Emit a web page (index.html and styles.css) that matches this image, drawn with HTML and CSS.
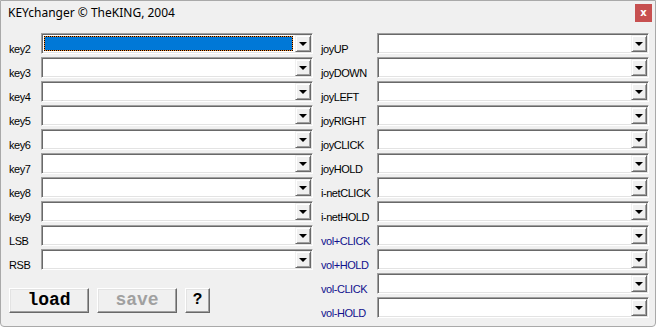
FILE: index.html
```html
<!DOCTYPE html>
<html lang="en">
<head>
    <meta charset="UTF-8">
    <title>KEYchanger</title>
    <link rel="stylesheet" href="styles.css">
</head>
<body>
    <div class="window">
        <div class="titlebar">
            <span class="title">KEYchanger © TheKING, 2004</span>
            <span class="close">x</span>
        </div>

        <div class="content">
            <div class="col col-left">
                <div class="row"><span class="lbl">key2</span><div class="combo"><span class="field"><span class="sel"></span></span><span class="drop"></span></div></div>
                <div class="row"><span class="lbl">key3</span><div class="combo"><span class="field"></span><span class="drop"></span></div></div>
                <div class="row"><span class="lbl">key4</span><div class="combo"><span class="field"></span><span class="drop"></span></div></div>
                <div class="row"><span class="lbl">key5</span><div class="combo"><span class="field"></span><span class="drop"></span></div></div>
                <div class="row"><span class="lbl">key6</span><div class="combo"><span class="field"></span><span class="drop"></span></div></div>
                <div class="row"><span class="lbl">key7</span><div class="combo"><span class="field"></span><span class="drop"></span></div></div>
                <div class="row"><span class="lbl">key8</span><div class="combo"><span class="field"></span><span class="drop"></span></div></div>
                <div class="row"><span class="lbl">key9</span><div class="combo"><span class="field"></span><span class="drop"></span></div></div>
                <div class="row"><span class="lbl">LSB</span><div class="combo"><span class="field"></span><span class="drop"></span></div></div>
                <div class="row"><span class="lbl">RSB</span><div class="combo"><span class="field"></span><span class="drop"></span></div></div>

                <div class="buttons">
                    <button class="btn btn-wide">load</button>
                    <button class="btn btn-wide" disabled>save</button>
                    <button class="btn btn-small">?</button>
                </div>
            </div>

            <div class="col col-right">
                <div class="row"><span class="lbl">joyUP</span><div class="combo"><span class="field"></span><span class="drop"></span></div></div>
                <div class="row"><span class="lbl">joyDOWN</span><div class="combo"><span class="field"></span><span class="drop"></span></div></div>
                <div class="row"><span class="lbl">joyLEFT</span><div class="combo"><span class="field"></span><span class="drop"></span></div></div>
                <div class="row"><span class="lbl">joyRIGHT</span><div class="combo"><span class="field"></span><span class="drop"></span></div></div>
                <div class="row"><span class="lbl">joyCLICK</span><div class="combo"><span class="field"></span><span class="drop"></span></div></div>
                <div class="row"><span class="lbl">joyHOLD</span><div class="combo"><span class="field"></span><span class="drop"></span></div></div>
                <div class="row"><span class="lbl">i-netCLICK</span><div class="combo"><span class="field"></span><span class="drop"></span></div></div>
                <div class="row"><span class="lbl">i-netHOLD</span><div class="combo"><span class="field"></span><span class="drop"></span></div></div>
                <div class="row"><span class="lbl vol">vol+CLICK</span><div class="combo"><span class="field"></span><span class="drop"></span></div></div>
                <div class="row"><span class="lbl vol">vol+HOLD</span><div class="combo"><span class="field"></span><span class="drop"></span></div></div>
                <div class="row"><span class="lbl vol">vol-CLICK</span><div class="combo"><span class="field"></span><span class="drop"></span></div></div>
                <div class="row"><span class="lbl vol">vol-HOLD</span><div class="combo"><span class="field"></span><span class="drop"></span></div></div>
            </div>
        </div>
    </div>
</body>
</html>
```

FILE: styles.css
```css
body{
    margin: 0;
    background-color: #ffffff;
}

.window{
    box-sizing: border-box;
    width: 656px;
    height: 327px;
    background-color: #f0f0f0;
    border: 1px solid #a9a9a9;
    border-radius: 0 0 4px 4px;
    font-family: "Liberation Sans", Arial, sans-serif;
}

.titlebar{
    display: flex;
    align-items: flex-start;
    height: 26px;
}
.title{
    flex: 1;
    padding: 4px 0 0 7px;
    font-family: "Noto Sans", "Liberation Sans", sans-serif;
    font-size: 12px;
    line-height: 16px;
    color: #000;
}
.close{
    width: 17px;
    height: 18px;
    margin: 3px 3px 0 0;
    background-color: #c75050;
    color: #fff;
    font-family: "DejaVu Sans", sans-serif;
    font-weight: bold;
    font-size: 10px;
    line-height: 17px;
    text-align: center;
}

.content{
    display: flex;
    gap: 8px;
    padding: 6px 0 0 8px;
}
.col{
    display: flex;
    flex-direction: column;
    gap: 3px;
}
.col-left .lbl{
    width: 32px;
}
.col-right .lbl{
    width: 56px;
}

.row{
    display: flex;
    height: 21px;
}
.lbl{
    box-sizing: border-box;
    padding-top: 10px;
    font-size: 11px;
    line-height: 13px;
    color: #000;
    white-space: nowrap;
    letter-spacing: -0.45px;
}
.vol{
    color: #10108e;
}

.combo{
    box-sizing: border-box;
    display: flex;
    width: 272px;
    height: 21px;
    border: 1px solid;
    border-color: #a0a0a0 #ffffff #ffffff #a0a0a0;
    box-shadow: inset 1px 1px #696969, inset -1px -1px #e3e3e3;
    padding: 1px;
    background-color: #fff;
}
.field{
    flex: 1;
    display: flex;
    padding: 1px 2px 1px 1px;
}
.sel{
    flex: 1;
    border: 1px dotted #000;
    background: linear-gradient(#0078d7, #0078d7) padding-box, #f4892c border-box;
}
.drop{
    box-sizing: border-box;
    display: flex;
    align-items: center;
    justify-content: center;
    width: 16px;
    background-color: #f0f0f0;
    border: 1px solid;
    border-color: #f0f0f0 #696969 #696969 #f0f0f0;
    box-shadow: inset 1px 1px #fff, inset -1px -1px #a0a0a0;
}
.drop::after{
    content: "";
    border-left: 4px solid transparent;
    border-right: 4px solid transparent;
    border-top: 4px solid #000;
}

.buttons{
    display: flex;
    gap: 8px;
    margin-top: 15px;
}
.btn{
    box-sizing: border-box;
    height: 25px;
    padding: 0;
    background-color: #f0f0f0;
    border: 1px solid;
    border-color: #fff #696969 #696969 #fff;
    box-shadow: inset -1px -1px #a0a0a0, inset 1px 1px #e3e3e3;
    font-family: "Liberation Mono", "Courier New", monospace;
    font-weight: bold;
    font-size: 18px;
    line-height: 21px;
    color: #000;
}
.btn:disabled{
    color: #a0a0a0;
}
.btn-wide{
    width: 80px;
}
.btn-small{
    width: 25px;
    font-size: 16px;
}
```
